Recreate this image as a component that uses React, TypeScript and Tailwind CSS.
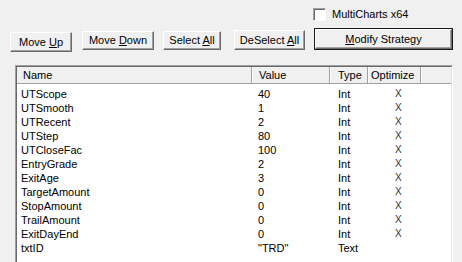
import React from "react";

const rows: [string, string, string, boolean][] = [
	["UTScope", "40", "Int", true],
	["UTSmooth", "1", "Int", true],
	["UTRecent", "2", "Int", true],
	["UTStep", "80", "Int", true],
	["UTCloseFac", "100", "Int", true],
	["EntryGrade", "2", "Int", true],
	["ExitAge", "3", "Int", true],
	["TargetAmount", "0", "Int", true],
	["StopAmount", "0", "Int", true],
	["TrailAmount", "0", "Int", true],
	["ExitDayEnd", "0", "Int", true],
	["txtID", "\"TRD\"", "Text", false],
];

function Btn({ className, children }: { className: string; children: React.ReactNode }) {
	return (
		<div className={"flex items-center justify-center bg-[#f0f0f0] border border-t-white border-l-white border-r-[#696969] border-b-[#696969] shadow-[inset_-1px_-1px_0_#a0a0a0] text-black " + className}>
			<span className="leading-none">{children}</span>
		</div>
	);
}

export default function App() {
	return (
		<div className="w-[462px] h-[262px] overflow-hidden bg-[#f0f0f0] text-[11px] text-black font-['Liberation_Sans',Arial,sans-serif]">
			{/* checkbox */}
			<div className="flex items-center pt-[8px] pl-[313px] h-[28px] items-start">
				<div className="w-[13px] h-[13px] bg-white border border-t-[#a0a0a0] border-l-[#a0a0a0] border-r-white border-b-white shadow-[inset_1px_1px_0_#696969]" />
				<span className="ml-[6px] leading-[13px]">MultiCharts x64</span>
			</div>

			{/* button row */}
			<div className="flex items-start h-[37px]">
				<Btn className="ml-[10px] mt-[4px] w-[62px] h-[20px]">
					Move <u>U</u>p
				</Btn>
				<Btn className="ml-[10px] mt-[3px] w-[72px] h-[19px]">
					Move <u>D</u>own
				</Btn>
				<Btn className="ml-[9px] mt-[3px] w-[58px] h-[19px]">
					Select <u>A</u>ll
				</Btn>
				<Btn className="ml-[13px] mt-[2px] w-[71px] h-[20px]">
					DeSelect <u>A</u>ll
				</Btn>
				<div className="ml-[9px] border border-[#1a1a1a]">
					<Btn className="w-[137px] h-[20px]">
						<u>M</u>odify Strategy
					</Btn>
				</div>
			</div>

			{/* list view */}
			<div className="ml-[15px] w-[438px] h-[240px] border border-t-[#a0a0a0] border-l-[#a0a0a0] border-r-white border-b-white">
				<div className="h-full bg-white border border-t-[#696969] border-l-[#696969] border-r-[#e3e3e3] border-b-[#e3e3e3]">
					<div className="grid grid-cols-[235px_78px_38px_53px_1fr] h-[17px] bg-[#f0f0f0] border-b border-[#a0a0a0]">
						<div className="pl-[6px] leading-[16px] border-r border-[#a0a0a0]">Name</div>
						<div className="pl-[6px] leading-[16px] border-r border-l border-r-[#a0a0a0] border-l-white">Value</div>
						<div className="pl-[7px] leading-[16px] border-r border-l border-r-[#a0a0a0] border-l-white">Type</div>
						<div className="pl-[2px] leading-[16px] border-r border-l border-r-[#a0a0a0] border-l-white">Optimize</div>
						<div className="border-l border-white" />
					</div>
					<div className="pt-[3px]">
						{rows.map(([name, value, type, opt]) => (
							<div key={name} className="grid grid-cols-[235px_78px_38px_53px_1fr] h-[14px] leading-[14px]">
								<div className="pl-[4px]">{name}</div>
								<div className="pl-[6px]">{value}</div>
								<div className="pl-[8px]">{type}</div>
								<div className="pl-[27px] text-[10px] text-[#333]">{opt ? "X" : ""}</div>
								<div />
							</div>
						))}
					</div>
				</div>
			</div>
		</div>
	);
}
